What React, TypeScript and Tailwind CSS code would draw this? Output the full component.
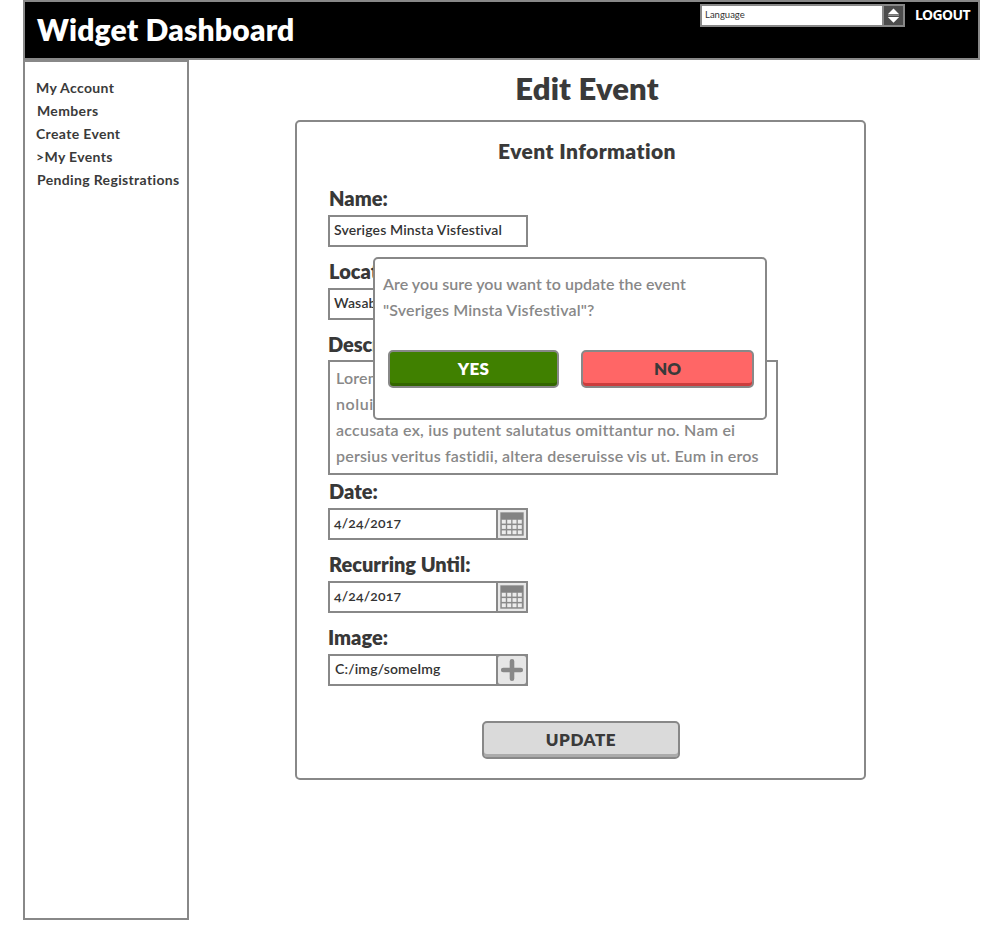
import React from 'react';

const navItems = [
  { label: 'My Account', indent: 'pl-0' },
  { label: 'Members', indent: 'pl-px' },
  { label: 'Create Event', indent: 'pl-0' },
  { label: '>My Events', indent: 'pl-0' },
  { label: 'Pending Registrations', indent: 'pl-px' },
];

const labelClass = 'block text-[20px] font-extrabold text-[#383838]';
const boxClass = 'flex h-8 w-[200px] border-2 border-[#888]';
const valueClass = 'flex-1 pl-1 text-[14px] font-semibold leading-[25px] tracking-[0.15px] text-[#333] whitespace-nowrap';
const buttonClass = 'h-[38px] rounded-[5px] border-2 border-[#888] text-center text-[17px] font-extrabold';

function CalendarIcon() {
  const columns = [3.8, 9.2, 14.5, 19.8];
  const rows = [9.8, 15.1, 20.4];
  return (
    <svg className="block size-7" viewBox="0 0 28 28">
      <rect x="2.3" y="2.3" width="23.4" height="23.4" fill="#8a8a8a" />
      <rect x="3" y="3" width="22" height="6" fill="#838383" />
      {rows.map((y) => columns.map((x) => <rect key={`${x}-${y}`} x={x} y={y} width="4" height="3.8" fill="#ececec" />))}
    </svg>
  );
}

function DateBox({ value }: { value: string }) {
  return (
    <div className={boxClass}>
      <span className={`${valueClass} oldstyle-nums`}>{value}</span>
      <span className="w-[30px] border-l-2 border-[#888] bg-[#e8e8e8]">
        <CalendarIcon />
      </span>
    </div>
  );
}

export default function App() {
  return (
    <div className="h-[940px] w-[1000px] overflow-hidden bg-white pl-[23px] font-['Lato','Noto_Sans',sans-serif] text-[#3a3a3a]">
      <header className="flex h-[60px] w-[957px] items-start border-2 border-[#888] bg-black text-white">
        <h1 className="grow pl-3 pt-[9px] text-[30px] font-extrabold leading-[37px] tracking-[0.2px]">Widget Dashboard</h1>
        <div className="mt-[2px] flex h-[23px] w-[205px] border-2 border-[#888] bg-white">
          <span className="flex-1 pl-[3px] text-[9.5px] leading-[18px] text-[#333]">Language</span>
          <span className="w-[21px] border-l-2 border-[#888] bg-[#4c4c4c]">
            <svg className="block h-[19px] w-[19px]" viewBox="0 0 19 19">
              <path d="M9.5 2.5 15.2 8.3H3.8Z" fill="#fff" />
              <path d="M4 9.5h11" stroke="#888" />
              <path d="M9.5 16.8 15.2 11H3.8Z" fill="#fff" />
            </svg>
          </span>
        </div>
        <span className="w-[73px] pl-[10px] pt-[3px] font-['Noto_Sans',sans-serif] text-[14px] font-bold leading-5 tracking-[-0.6px]">LOGOUT</span>
      </header>
      <div className="flex">
        <nav className="h-[860px] w-[166px] border-2 border-[#888] pl-[11px] pt-[14px] text-[14px] font-bold leading-[23px] tracking-[0.35px] whitespace-nowrap">
          {navItems.map((item) => (
            <div key={item.label} className={item.indent}>{item.label}</div>
          ))}
        </nav>
        <main className="ml-[106px] w-[571px]">
          <h2 className="h-[60px] pl-[13px] pt-2 text-center text-[31px] font-extrabold leading-10 tracking-[0.15px]">Edit Event</h2>
          <section className="relative h-[660px] rounded-[5px] border-2 border-[#888] pl-[31px]">
            <h3 className="h-[61px] pr-[18px] pt-4 text-center text-[21px] font-extrabold leading-[25px] tracking-[0.4px]">Event Information</h3>
            <label className={`${labelClass} h-8 pl-px leading-[31px]`}>Name:</label>
            <div className={boxClass}><span className={valueClass}>Sveriges Minsta Visfestival</span></div>
            <label className={`${labelClass} mt-[9px] h-8 pl-px leading-[31px]`}>Location:</label>
            <div className={boxClass}><span className={valueClass}>Wasabryggeriet</span></div>
            <label className={`${labelClass} mt-[9px] h-[31px] leading-[31px] tracking-[-0.1px]`}>Description:</label>
            <div className="h-[115px] w-[450px] border-2 border-[#888] pl-[6px] pt-[3px] text-[16px] font-semibold leading-[26px] tracking-[0.18px] whitespace-nowrap text-[#888]">
              <p>Lorem ipsum dolor sit amet, mel ad</p>
              <p className="tracking-[0.6px]">noluisse constituto, eum</p>
              <p className="tracking-[0.23px]">accusata ex, ius putent salutatus omittantur no. Nam ei</p>
              <p>persius veritus fastidii, altera deseruisse vis ut. Eum in eros</p>
            </div>
            <label className={`${labelClass} mt-px h-8 pl-px leading-[31px]`}>Date:</label>
            <DateBox value="4/24/2017" />
            <label className={`${labelClass} mt-[9px] h-8 pl-px leading-[31px]`}>Recurring Until:</label>
            <DateBox value="4/24/2017" />
            <label className={`${labelClass} mt-[9px] h-8 leading-[31px]`}>Image:</label>
            <div className={boxClass}>
              <span className={`${valueClass} pl-[5px]`}>C:/img/someImg</span>
              <span className="w-[30px] border-l-2 border-[#888] bg-[#888]">
                <svg className="block size-7 rounded-[2px] bg-[#e6e6e6]" viewBox="0 0 28 28">
                  <path d="M5.2 14h17.6M14 5.2v17.6" stroke="#888" strokeWidth="4.6" strokeLinecap="round" />
                </svg>
              </span>
            </div>
            <button className={`${buttonClass} ml-[154px] mt-[35px] block w-[198px] bg-[#dadada] pb-[2px] leading-[31px] tracking-[0.55px] shadow-[inset_0_-3px_0_#ababab]`}>UPDATE</button>
            <div role="dialog" className="absolute left-[76px] top-[135px] h-[163px] w-[394px] rounded-[5px] border-2 border-[#888] bg-white pl-2 pt-3 text-[#888]">
              <p className="text-[16px] font-semibold leading-[26px] tracking-[0.05px]">Are you sure you want to update the event</p>
              <p className="text-[16px] font-semibold leading-[26px] tracking-[0.15px]">"Sveriges Minsta Visfestival"?</p>
              <div className="ml-[5px] mt-[27px] flex gap-[22px]">
                <button className={`${buttonClass} w-[171px] bg-[#408000] pb-[2px] leading-[31px] tracking-[0.3px] text-white shadow-[inset_0_-3px_0_#336600]`}>YES</button>
                <button className={`${buttonClass} w-[173px] bg-[#ff6666] pb-[2px] leading-[31px] text-[#3a3a3a] shadow-[inset_0_-3px_0_#cc3d3d]`}>NO</button>
              </div>
            </div>
          </section>
        </main>
      </div>
    </div>
  );
}
